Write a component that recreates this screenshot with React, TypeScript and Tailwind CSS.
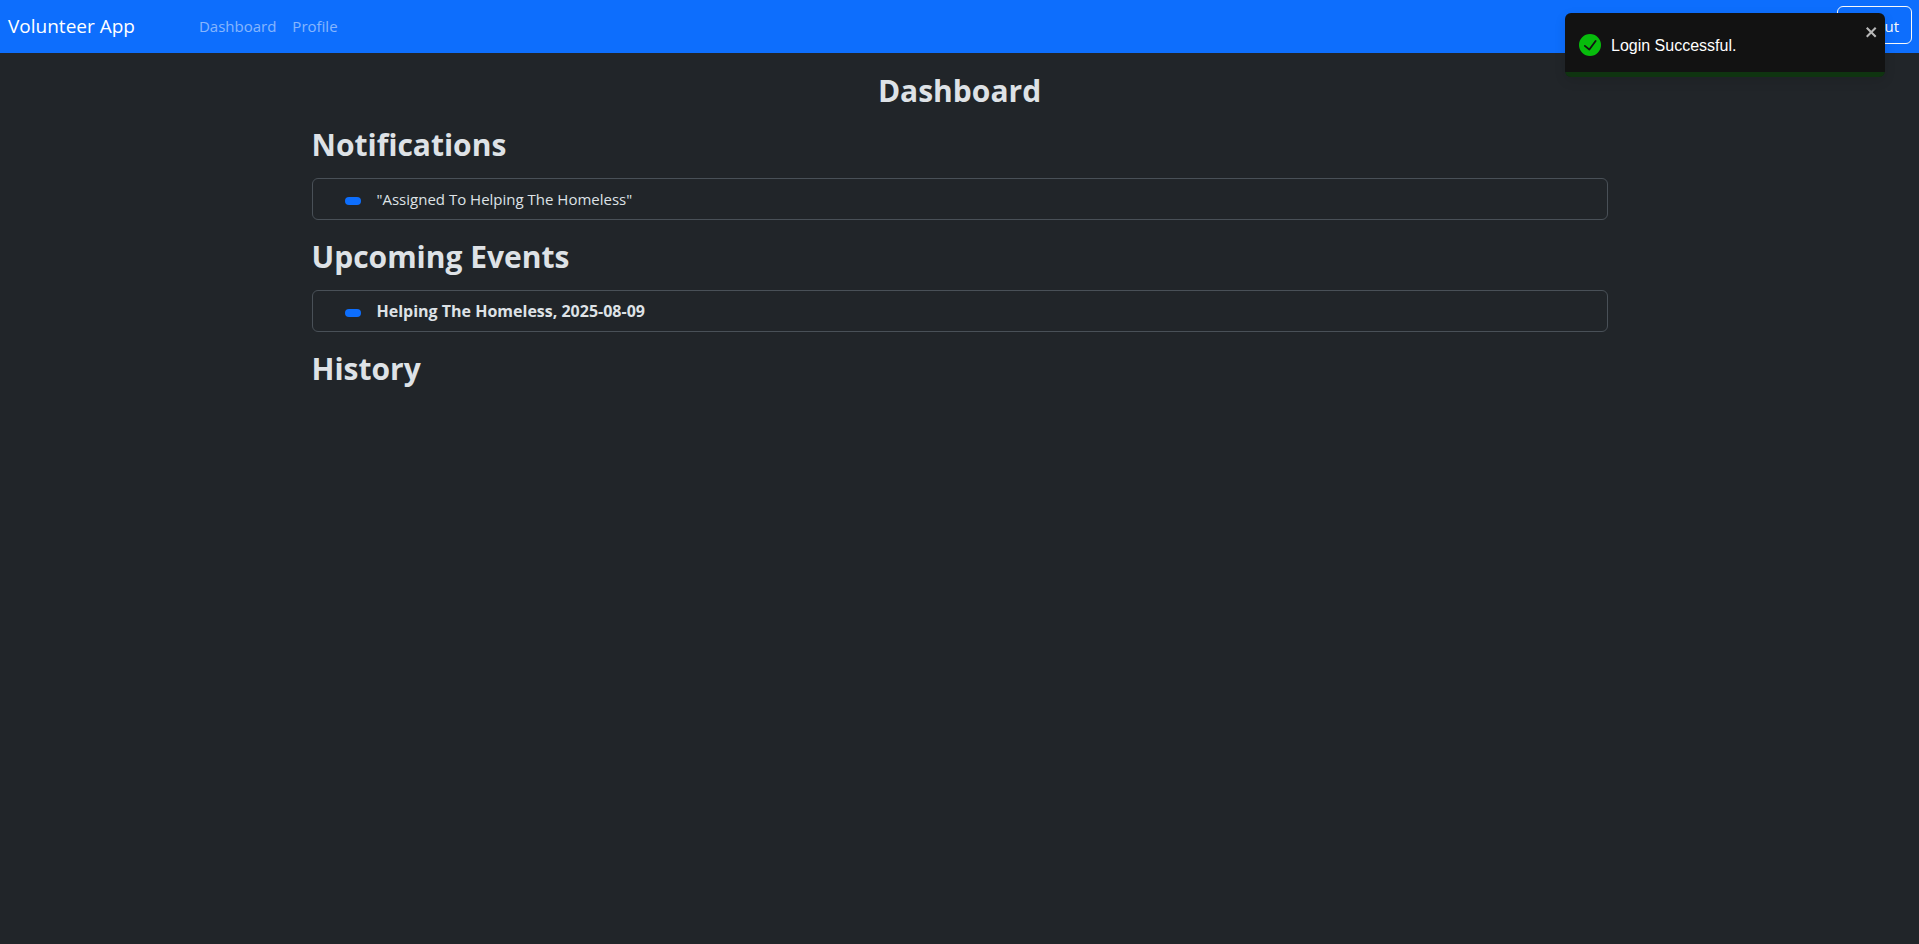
const notifications = ['"Assigned To Helping The Homeless"'];
const events = ["Helping The Homeless, 2025-08-09"];

function Section({ title, items, bold = false }: { title: string; items: string[]; bold?: boolean }) {
  return (
    <section className="flex flex-col gap-[14px]">
      <h2 className="text-[30px] font-bold leading-[38px]">{title}</h2>
      {items.length > 0 && (
        <ul className="rounded-md border border-[#495057]">
          {items.map((item) => (
            <li key={item} className="flex h-10 items-center gap-4 px-8">
              <span className="mt-1 h-2 w-4 rounded-md bg-[#0d6efd]" />
              <span className={bold ? "text-base font-bold" : "text-[15px]"}>{item}</span>
            </li>
          ))}
        </ul>
      )}
    </section>
  );
}

function Toast() {
  return (
    <div
      role="alert"
      className="absolute right-[34px] top-[13px] flex h-16 w-80 items-center overflow-hidden rounded-md bg-[#121212] px-3.5 font-['Liberation_Sans',Arial,sans-serif] text-white shadow-[0_4px_12px_rgba(0,0,0,0.1)]"
    >
      <svg viewBox="0 0 24 24" width="22" height="22" fill="#07bc0c" aria-hidden="true">
        <path d="M12 0a12 12 0 1012 12A12.014 12.014 0 0012 0zm6.927 8.2l-6.845 9.289a1.011 1.011 0 01-1.43.188l-4.888-3.908a1 1 0 111.25-1.562l4.076 3.261 6.227-8.451a1 1 0 111.61 1.183z" />
      </svg>
      <p className="pl-2.5 pt-0.5 text-base">Login Successful.</p>
      <button type="button" aria-label="Close" className="absolute right-[6px] top-[7px] py-1 opacity-70">
        <svg viewBox="0 0 14 16" width="14" height="16" fill="#fff" aria-hidden="true">
          <path
            fillRule="evenodd"
            d="M7.71 8.23l3.75 3.75-1.48 1.48-3.75-3.75-3.75 3.75L1 11.98l3.75-3.75L1 4.48 2.48 3l3.75 3.75L9.98 3l1.48 1.48-3.75 3.75z"
          />
        </svg>
      </button>
      <span className="absolute inset-x-0 bottom-0 h-[5px] bg-[#07bc0c]/20" />
    </div>
  );
}

export default function App() {
  return (
    <div className="relative min-h-screen bg-[#212529] font-['Open_Sans','Noto_Sans',sans-serif] text-[#dee2e6]">
      <nav className="flex h-[53px] items-center bg-[#0d6efd] pl-2 pr-[7px]">
        <a href="#" className="text-[19px] text-white">Volunteer App</a>
        <div className="ml-16 flex gap-4 text-[15px] text-white/50">
          <a href="#dashboard">Dashboard</a>
          <a href="#profile">Profile</a>
        </div>
        <button
          type="button"
          className="mb-[3px] ml-auto h-[38px] rounded-md border border-[#f8f9fa] px-3 pt-0.5 text-[15px] text-[#f8f9fa]"
        >
          Logout
        </button>
      </nav>
      <main className="mx-auto flex max-w-[1320px] flex-col gap-4 px-3 pt-[19px]">
        <h1 className="text-center text-[30px] font-bold leading-[38px]">Dashboard</h1>
        <div className="flex flex-col gap-[18px]">
          <Section title="Notifications" items={notifications} />
          <Section title="Upcoming Events" items={events} bold />
          <Section title="History" items={[]} />
        </div>
      </main>
      <Toast />
    </div>
  );
}
